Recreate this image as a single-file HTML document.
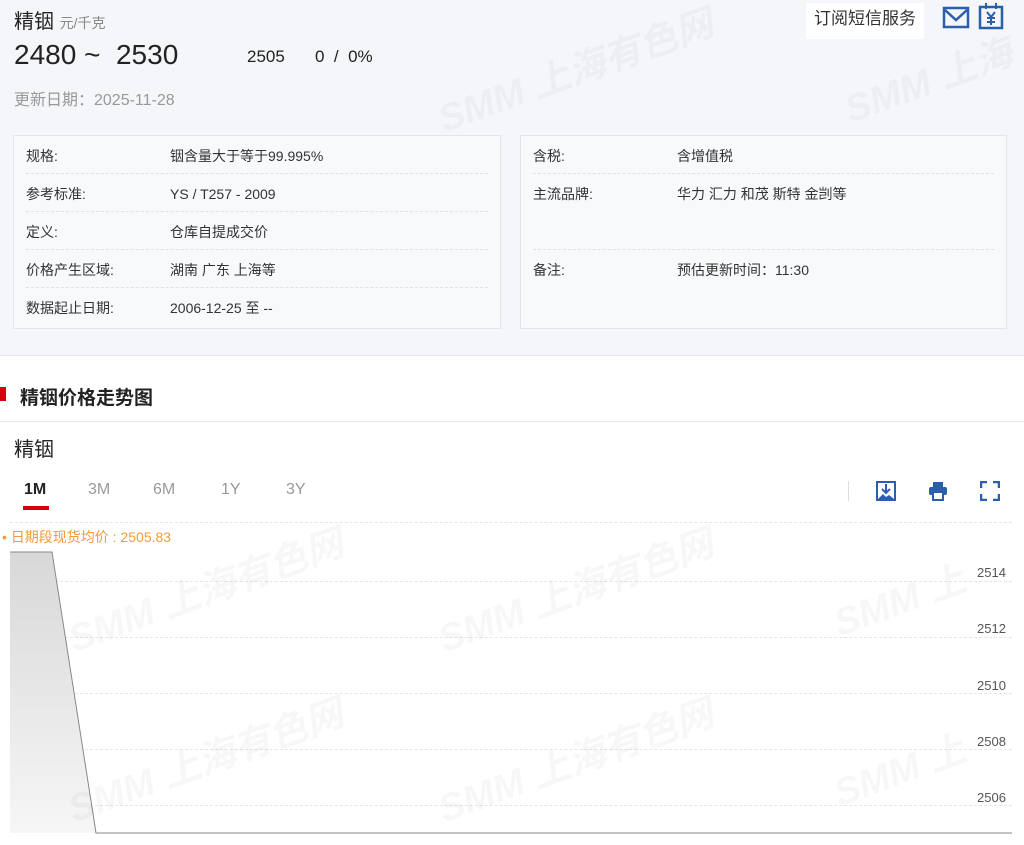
<!DOCTYPE html><html><head><meta charset="utf-8"><style>
body{margin:0;width:1024px;height:845px;overflow:hidden;background:#fff;font-family:"Liberation Sans","Noto Sans CJK SC",sans-serif;color:#333;position:relative}
.a{position:absolute;white-space:nowrap}
.top{position:absolute;left:0;top:0;width:1024px;height:355px;background:#f5f6f9;border-bottom:1px solid #e8e8e8}
.box{position:absolute;top:135px;height:192px;border:1px solid #e3e5ea;background:#f8f9fb}
.row{position:absolute;left:12px;right:12px;height:37px;border-bottom:1px dashed #e2e2e2;font-size:14px;line-height:40px}
.row span{position:absolute;left:144px}
.wm{position:absolute;color:rgba(0,0,0,0.03);font-weight:bold;font-size:38px;transform:rotate(-20deg);white-space:nowrap;font-style:italic}
.g{position:absolute;left:10px;width:1002px;border-top:1px dashed #e6e6e6}
.yl{position:absolute;left:977px;font-size:13px;color:#555}
</style></head><body>
<div class="top"></div>
<div class="wm" style="left:430px;top:40px">SMM 上海有色网</div>
<div class="wm" style="left:840px;top:50px">SMM 上海</div>
<div class="a" style="left:14px;top:5px;font-size:20px;color:#222">精铟 <span style="font-size:14px;color:#888">元/千克</span></div>
<div class="a" style="left:14px;top:39px;font-size:28px;color:#222">2480 ~&nbsp; 2530</div>
<div class="a" style="left:247px;top:47px;font-size:17px;color:#222">2505</div>
<div class="a" style="left:315px;top:47px;font-size:17px;color:#222">0&nbsp; / &nbsp;0%</div>
<div class="a" style="left:14px;top:86px;font-size:16px;color:#999">更新日期：2025-11-28</div>
<div class="a" style="left:806px;top:3px;width:118px;height:36px;background:#fff;font-size:17px;line-height:32px;text-align:center;color:#333">订阅短信服务</div>
<svg class="a" style="left:942px;top:6px" width="28" height="24" viewBox="0 0 28 24"><rect x="2" y="2" width="24" height="19" fill="none" stroke="#2a5fb0" stroke-width="2.5"/><path d="M3 4 L14 14 L25 4" fill="none" stroke="#2a5fb0" stroke-width="2.5"/></svg>
<svg class="a" style="left:978px;top:2px" width="26" height="28" viewBox="0 0 26 28"><rect x="2" y="5" width="22" height="21" fill="none" stroke="#2a5fb0" stroke-width="2.5"/><path d="M8 1v6M18 1v6M9 10l4 5 4-5M13 15v8M9 16h8M9 20h8" fill="none" stroke="#2a5fb0" stroke-width="2"/></svg>
<div class="box" style="left:13px;width:486px">
<div class="row" style="top:0">规格:<span>铟含量大于等于99.995%</span></div>
<div class="row" style="top:38px">参考标准:<span>YS / T257 - 2009</span></div>
<div class="row" style="top:76px">定义:<span>仓库自提成交价</span></div>
<div class="row" style="top:114px">价格产生区域:<span>湖南 广东 上海等</span></div>
<div class="row" style="top:152px;border:none">数据起止日期:<span>2006-12-25 至 --</span></div>
</div>
<div class="box" style="left:520px;width:485px">
<div class="row" style="top:0">含税:<span>含增值税</span></div>
<div class="row" style="top:38px;height:75px">主流品牌:<span>华力 汇力 和茂 斯特 金剀等</span></div>
<div class="row" style="top:114px;border:none">备注:<span>预估更新时间：11:30</span></div>
</div>
<div class="a" style="left:0;top:387px;width:6px;height:14px;background:#d9000d"></div>
<div class="a" style="left:20px;top:383px;font-size:19px;font-weight:bold;color:#222">精铟价格走势图</div>
<div class="a" style="left:0;top:421px;width:1024px;border-top:1px solid #e8e8e8"></div>
<div class="a" style="left:14px;top:433px;font-size:20px;color:#222">精铟</div>
<div class="a" style="left:24px;top:481px;font-size:16px;font-weight:bold;color:#222">1M</div>
<div class="a" style="left:23px;top:506px;width:26px;height:4px;background:#d9000d"></div>
<div class="a" style="left:88px;top:481px;font-size:16px;color:#999">3M</div>
<div class="a" style="left:153px;top:481px;font-size:16px;color:#999">6M</div>
<div class="a" style="left:221px;top:481px;font-size:16px;color:#999">1Y</div>
<div class="a" style="left:286px;top:481px;font-size:16px;color:#999">3Y</div>
<div class="a" style="left:848px;top:481px;height:20px;border-left:1px solid #ddd"></div>
<svg class="a" style="left:876px;top:481px" width="20" height="20" viewBox="0 0 20 20"><rect x="1" y="1" width="18" height="18" fill="none" stroke="#2a5fb0" stroke-width="2"/><path d="M10 3v8M6 8l4 4 4-4" stroke="#2a5fb0" stroke-width="2" fill="none"/><path d="M2 18l5-5 3 3 3-2 5 4z" fill="#2a5fb0"/></svg>
<svg class="a" style="left:928px;top:481px" width="20" height="20" viewBox="0 0 20 20"><rect x="5" y="1" width="10" height="5" fill="#2a5fb0"/><rect x="1" y="6" width="18" height="8" rx="2" fill="#2a5fb0"/><rect x="5" y="11" width="10" height="8" fill="#fff" stroke="#2a5fb0" stroke-width="2"/></svg>
<svg class="a" style="left:980px;top:481px" width="20" height="20" viewBox="0 0 20 20"><path d="M1 7V1h6M13 1h6v6M19 13v6h-6M7 19H1v-6" fill="none" stroke="#2a5fb0" stroke-width="2.5"/></svg>
<div class="g" style="top:522px"></div>
<div class="a" style="left:2px;top:527px;font-size:14px;color:#f39a3a">• 日期段现货均价 : 2505.83</div>
<div class="g" style="top:581px"></div><div class="g" style="top:637px"></div><div class="g" style="top:693px"></div><div class="g" style="top:749px"></div><div class="g" style="top:805px"></div>
<div class="yl" style="top:565px">2514</div><div class="yl" style="top:621px">2512</div><div class="yl" style="top:678px">2510</div><div class="yl" style="top:734px">2508</div><div class="yl" style="top:790px">2506</div>
<svg class="a" style="left:0;top:540px" width="1024" height="305"><defs><linearGradient id="gr" x1="0" y1="0" x2="0" y2="1"><stop offset="0" stop-color="#d8d8d8"/><stop offset="1" stop-color="#f6f6f6"/></linearGradient></defs><path d="M10 12H52L96 293H1012V293H10Z" fill="url(#gr)"/><path d="M10 12H52L96 293H1012" fill="none" stroke="#888" stroke-width="1"/></svg>
<div class="wm" style="left:60px;top:560px">SMM 上海有色网</div>
<div class="wm" style="left:430px;top:560px">SMM 上海有色网</div>
<div class="wm" style="left:830px;top:570px">SMM 上</div>
<div class="wm" style="left:60px;top:730px">SMM 上海有色网</div>
<div class="wm" style="left:430px;top:730px">SMM 上海有色网</div>
<div class="wm" style="left:830px;top:740px">SMM 上</div>
</body></html>
